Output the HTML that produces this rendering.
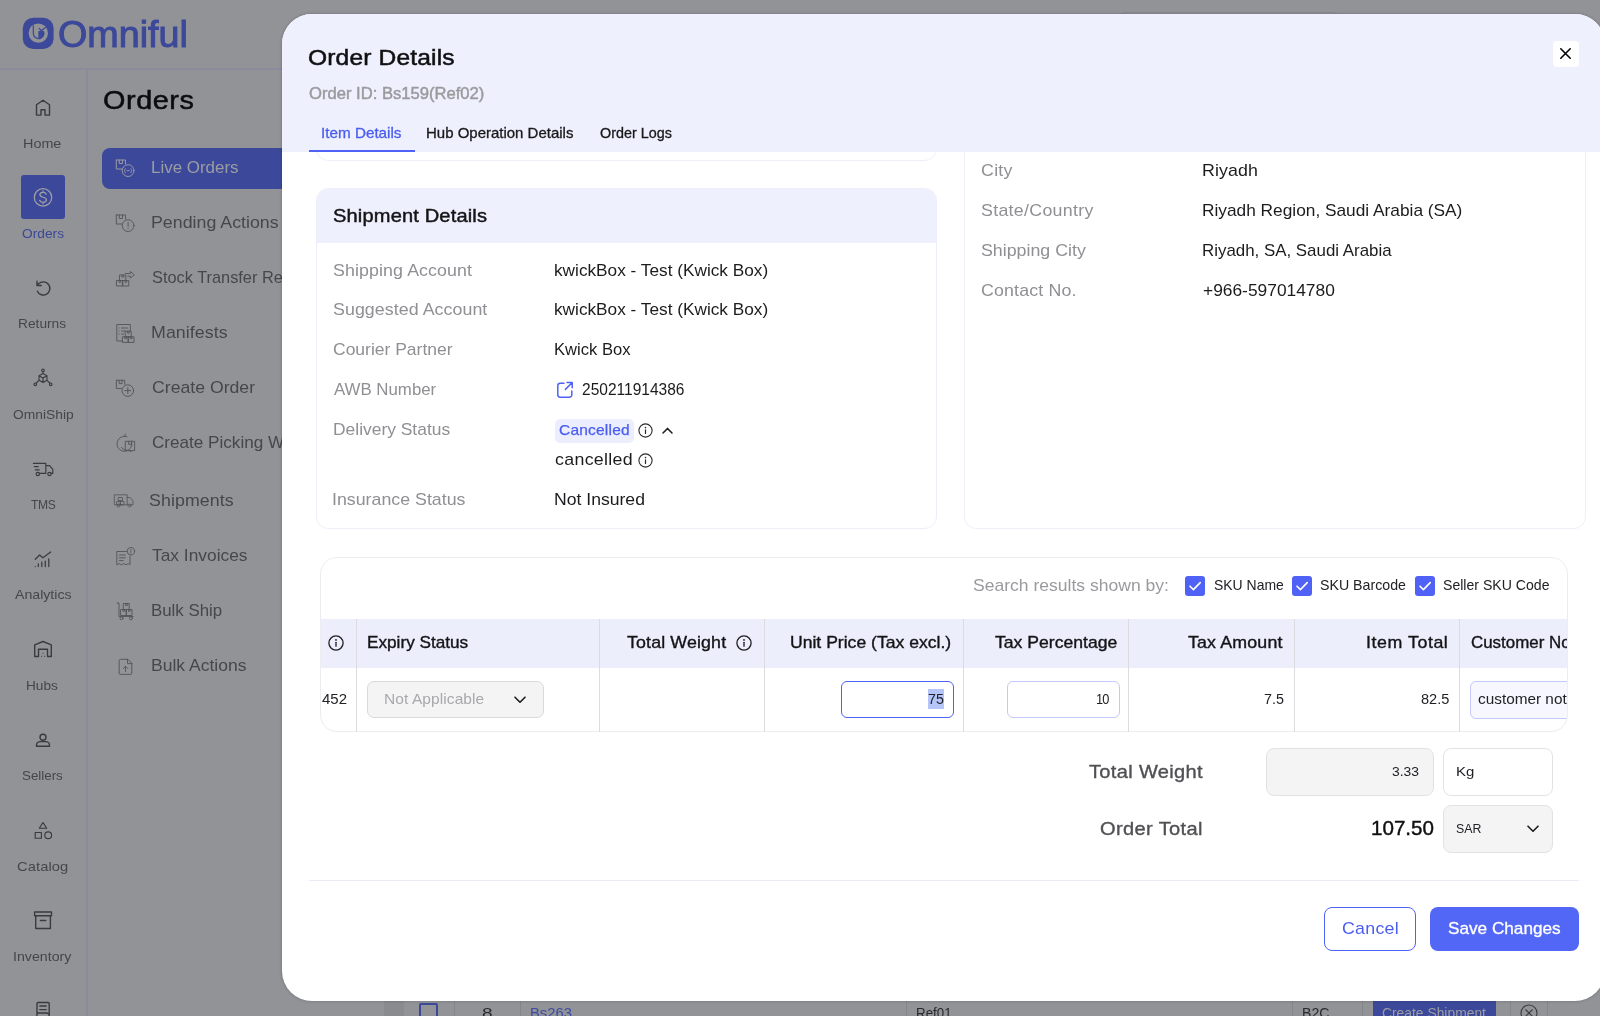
<!DOCTYPE html>
<html lang="en">
<head>
<meta charset="utf-8">
<title>Order Details - Omniful</title>
<style>
*{box-sizing:border-box;margin:0;padding:0}
html,body{width:1600px;height:1016px;overflow:hidden;background:#929397;font-family:"Liberation Sans",sans-serif;}
.abs{position:absolute}
.t{position:absolute;white-space:pre;display:block;transform-origin:0 50%}
#bg{position:absolute;left:0;top:0;width:1600px;height:1016px;overflow:hidden;background:#929397}
#modal{position:absolute;left:282px;top:14px;width:1323px;height:986.6px;background:#fff;border-radius:30px;overflow:hidden;box-shadow:0 0 3px rgba(40,40,60,.35)}
#mhead{position:absolute;left:0;top:0;width:100%;height:138px;background:#eff0fd}
#mc,#bgt{position:absolute;left:0;top:0;width:1600px;height:1016px;overflow:hidden;will-change:transform}
.card{position:absolute;border:1px solid #edeefa;border-radius:12px;background:#fff}
svg{position:absolute;overflow:visible}
.ico{fill:none;stroke:#3a3a3f;stroke-width:1.4;stroke-linecap:round;stroke-linejoin:round}
.mico{fill:none;stroke:#4a4a50;stroke-width:1;stroke-linecap:round;stroke-linejoin:round}
.vline{position:absolute;width:1px;background:#dcdce0;top:619px;height:113px}
.cb{position:absolute;width:20px;height:20px;border-radius:3px;background:#4f62f5;top:575.5px}
</style>
</head>
<body>
<div id="bg">
  <!-- header + sidebars (dimmed behind overlay) -->
  <div class="abs" style="left:0;top:68.2px;width:1600px;height:1.5px;background:#888c9d"></div>
  <div class="abs" style="left:86px;top:69px;width:2px;height:947px;background:#888c9d"></div>
  <div class="abs" style="left:1118px;top:11.5px;width:222px;height:30px;border:1px solid #8a8b90;border-radius:8px"></div>
  <div class="abs" style="left:21px;top:175px;width:44px;height:44px;border-radius:3px;background:#3c4899"></div>
  <div class="abs" style="left:101.5px;top:147.5px;width:200px;height:41.5px;border-radius:8px;background:#3c4899"></div>
  <!-- logo -->
<svg style="left:0;top:0" width="100" height="69" viewBox="0 0 100 69">
  <rect x="22.8" y="17.7" width="30.8" height="31.3" rx="10.5" ry="10.5" fill="#3c4899"/>
  <circle cx="38.3" cy="33.1" r="9.7" fill="#929397"/>
  <path d="M33.3 25.400V33.300A5.300 5.300 0 0 0 38.600 38.600" fill="none" stroke="#3c4899" stroke-width="1.200"/>
  <path d="M38.300 39.200V31.300L41.400 30.200 44.100 31.200A5.900 5.900 0 0 1 38.300 39.200Z" fill="#3c4899"/>
  <path d="M38.800 28.300L41.500 30.500 45.800 27.200" fill="none" stroke="#3c4899" stroke-width="1.200"/>
</svg>
<!-- sidebar icons -->
<svg style="left:0;top:0" width="88" height="1016" viewBox="0 0 88 1016">
 <g class="ico" stroke="#45464b" stroke-width="1.25">
  <path d="M36.5 115.100V104.800L43 100.200l6.500 4.600v10.300h-4.500v-5.300h-4v5.300z"/>
  <!-- returns -->
  <path d="M37.300 291.200a6.600 6.600 0 1 0 1.500-7.600l-1.800 1.800M37 281.200v4.300h4.300"/>
  <!-- omniship -->
  <path d="M43 373.500l4 2.200v4.600l-4 2.200-4-2.200v-4.600zM39 375.700l4 2.200 4-2.200M43 377.900v4.600M43 371.600v1.900M39 380.300l-2.700 2.700M47 380.300l2.700 2.700" stroke-width="1.100"/>
  <circle cx="43" cy="370.300" r="1.300" stroke-width="1.100"/><circle cx="35.300" cy="384.300" r="1.300" stroke-width="1.100"/><circle cx="50.700" cy="384.300" r="1.300" stroke-width="1.100"/>
  <!-- tms truck -->
  <path d="M36.500 463.400h9.300v10h-2.300M45.800 465.600h3.800l3.200 3.800v4h-1.600M39.300 473.400h5.500M33.400 463.400h3M34.300 466.600h4M35.300 469.800h4" stroke-width="1.150"/>
  <circle cx="37.800" cy="474" r="1.700" stroke-width="1.150"/><circle cx="49.500" cy="474" r="1.700" stroke-width="1.150"/>
  <!-- analytics -->
  <path d="M35.300 559.300l4.300-4.300 3.300 2.800 7.800-5.800M38.300 566.500v-2.600M41.800 566.500v-4.400M45.300 566.500v-5.400M48.800 566.500v-7.600M35.200 566.500h.1" stroke-width="1.250"/>
  <!-- hubs -->
  <path d="M34.700 656.500v-11.600L43 641.500l8.300 3.400v11.600h-3.800v-7.300h-9v7.300z"/>
  <path d="M41.500 656.300h.1M44.500 656.300h.1M43 653.300h.1" stroke-width="1.100"/>
  <!-- sellers -->
  <circle cx="43" cy="737.200" r="3"/>
  <path d="M36.500 746.300v-1.300c0-2 1.800-3.400 3.800-3.400h5.400c2 0 3.800 1.400 3.800 3.400v1.300z"/>
  <!-- catalog -->
  <path d="M43 822.500l3.700 5.700h-7.400zM35.200 832.500h6.200v5.700h-6.200z" stroke-width="1.150"/>
  <circle cx="48.200" cy="835.300" r="3.400" stroke-width="1.150"/>
  <!-- inventory -->
  <path d="M34.600 912h16.900v3.700H34.600zM35.700 915.700v12.800h14.700v-12.800M40.400 920.500h5.400"/>
  <!-- receipt -->
  <path d="M37 1017v-13.500a1 1 0 0 1 1-1h10.200a1 1 0 0 1 1 1v13.500M39.800 1006h6.400M39.800 1009.600h6.400M37 1013h9.500a2.600 2.600 0 0 1 2.600 2.600"/>
 </g>
 <!-- orders (active) -->
 <circle cx="43" cy="197.400" r="8.700" fill="none" stroke="#9fa0a7" stroke-width="1.250"/>
 <path d="M46.200 194.200c-.5-1.200-1.700-1.800-3.200-1.800-1.800 0-3.100.9-3.100 2.400 0 3.400 6.500 1.500 6.500 5 0 1.600-1.400 2.500-3.300 2.500-1.700 0-3-.7-3.500-2M43 190.800v1.600M43 202.300v1.600" fill="none" stroke="#9fa0a7" stroke-width="1.250" stroke-linecap="round"/>
</svg>
<!-- menu icons -->
<svg style="left:100px;top:140px" width="60" height="560" viewBox="100 140 60 560">
 <g fill="none" stroke="#9c9da3" stroke-width=".95" stroke-linecap="round" stroke-linejoin="round">
  <path d="M116.300 160h9.200v4M116.300 160v9h5.500M119.300 160v3.500h3.200V160"/>
  <circle cx="128.100" cy="170.600" r="5.900"/>
  <path d="M125.300 168.600c-.9 1.200-.9 2.800 0 4M130.900 168.600c.9 1.200.9 2.800 0 4M127 170.600h2.200"/>
 </g>
 <g fill="none" stroke="#55565b" stroke-width=".95" stroke-linecap="round" stroke-linejoin="round">
  <!-- pending actions -->
  <path d="M116.300 215h9.200v4M116.300 215v9h5.500M119.300 215v3.500h3.200V215"/>
  <circle cx="128.100" cy="225.600" r="5.900"/>
  <path d="M128.100 222.300v4.200M128.100 228.500v.2"/>
  <!-- stock transfer -->
  <path d="M116.800 280.500h6v5.500h-6zM122.800 280.500h6v5.500h-6zM119.800 275h6v5.500h-6zM121.800 275v2h2v-2M119 280.500v1.800h1.600v-1.800M125 280.500v1.800h1.600v-1.800"/>
  <path d="M125.300 273.500h5v-2l4 3.300-4 3.300v-2h-2.500"/>
  <!-- manifests -->
  <path d="M122.600 341h-5.800v-16.500h13.500v6.500M119 328h.2M119 331h.2M119 334h.2M121.500 328h6M121.500 331h4M121.500 334h2"/>
  <path d="M122.800 336.800h5.600v5.600h-5.600zM128.400 336.800h5.600v5.600h-5.600zM125.600 331.200h5.600v5.600h-5.600zM127.600 331.200v2h1.600v-2M124.800 336.800v1.800h1.600v-1.800M130.400 336.800v1.800h1.600v-1.800"/>
  <!-- create order -->
  <path d="M116.400 380.300h8.300v4M116.400 380.300v8.200h5M119.200 380.300v3.300h2.800v-3.300"/>
  <circle cx="127.800" cy="390.600" r="5.800"/>
  <path d="M125 390.600h5.600M127.800 387.800v5.600"/>
  <!-- create picking wave -->
  <path d="M124.500 436.300a7.500 7.500 0 1 0 7 5M127 436.800l-2.500-.5 1-2.300"/>
  <path d="M125.700 441.300h8.900v9.300h-8.900zM128.700 441.300v3h2.900v-3M121.500 447.500l3 2.500 4.500.5 2 1.200"/>
  <!-- shipments -->
  <path d="M114.700 494.800h12.500v10h-12.500zM127.200 497.500h3l2.800 3.500v3.800h-5.800M118.500 497.500h4v3h-4zM117 501.500h3.500v3.300H117zM120.500 501.500h3.500v3.300h-3.500z" stroke-width=".85"/>
  <circle cx="118.500" cy="505.500" r="1.500" stroke-width=".85"/><circle cx="129.500" cy="505.500" r="1.500" stroke-width=".85"/>
  <!-- tax invoices -->
  <path d="M127 551.500h-10.200v13.300l2.300-1.200 2.300 1.200 2.300-1.200 2.300 1.200 2.300-1.200 1.700.9v-8.500M119.300 555h6M119.300 557.800h6M119.300 560.600h4"/>
  <circle cx="130.900" cy="551.200" r="3.700"/>
  <path d="M130.900 549.300v3.800" stroke-width=".8"/>
  <!-- bulk ship -->
  <path d="M117 603h2v13.500h14M121 609.500h5.500v6H121zM126.500 609.500h5.500v6h-5.500zM123.700 603.500h5.500v6h-5.500zM125.700 603.500v2h1.600v-2M123 609.500v1.800h1.600v-1.800M128.500 609.500v1.800h1.600v-1.800"/>
  <circle cx="121.500" cy="618.300" r="1.500"/><circle cx="131" cy="618.300" r="1.500"/>
  <!-- bulk actions -->
  <path d="M127.500 659.300h-7a1.300 1.300 0 0 0-1.300 1.300v12.500a1.300 1.300 0 0 0 1.300 1.300h10a1.300 1.300 0 0 0 1.300-1.300v-9.500zM127.500 659.300v4.300h4.300M125.500 671.500v-5M123.300 668.500l2.200-2.200 2.200 2.200"/>
 </g>
</svg>

  <!-- bottom table row peeking under modal -->
    <div class="abs" style="left:384px;top:1000px;width:20px;height:16px;background:#8a8b8f"></div>
  <div class="abs" style="left:454px;top:1000px;width:1px;height:16px;background:#85868b"></div>
  <div class="abs" style="left:520px;top:1000px;width:1px;height:16px;background:#85868b"></div>
  <div class="abs" style="left:906px;top:1000px;width:1px;height:16px;background:#85868b"></div>
  <div class="abs" style="left:1292px;top:1000px;width:1px;height:16px;background:#85868b"></div>
  <div class="abs" style="left:1362px;top:1000px;width:1px;height:16px;background:#85868b"></div>
  <div class="abs" style="left:1510px;top:1000px;width:1px;height:16px;background:#85868b"></div>
  <div class="abs" style="left:1547px;top:1000px;width:1px;height:16px;background:#85868b"></div>
  <div class="abs" style="left:419px;top:1003px;width:19px;height:19px;border:2px solid #3c4899;border-radius:2px"></div>
  <div class="abs" style="left:1373px;top:999px;width:123px;height:24px;background:#3c4899"></div>
  <svg style="left:1520px;top:1004.3px" width="18" height="18" viewBox="0 0 18 18"><circle cx="9" cy="9" r="8" fill="none" stroke="#3a3a3f" stroke-width="1.1"/><path d="M5.5 5.5l7 7M12.5 5.5l-7 7" stroke="#3a3a3f" stroke-width="1.1" fill="none"/></svg>
</div>
<div id="bgt">
<span class="t" style="left:58.1px;top:9.2px;font-size:37px;line-height:52px;color:#3c4899;transform:scaleX(1.0189);-webkit-text-stroke:1.0px #3c4899;">Omniful</span>
<span class="t" style="left:102.9px;top:82.1px;font-size:25.5px;line-height:36px;color:#0c0c0e;transform:scaleX(1.13);letter-spacing:0.5px;-webkit-text-stroke:0.5px #0c0c0e;">Orders</span>
<span class="t" style="left:23.4px;top:134.6px;font-size:13.0px;line-height:18px;color:#45464b;transform:scaleX(1.1061);">Home</span>
<span class="t" style="left:22.0px;top:225.1px;font-size:13.0px;line-height:18px;color:#3c4899;transform:scaleX(1.0581);">Orders</span>
<span class="t" style="left:18.4px;top:315.1px;font-size:13.0px;line-height:18px;color:#45464b;transform:scaleX(1.0568);">Returns</span>
<span class="t" style="left:12.5px;top:405.6px;font-size:13.0px;line-height:18px;color:#45464b;transform:scaleX(1.0625);">OmniShip</span>
<span class="t" style="left:30.8px;top:496.1px;font-size:13.0px;line-height:18px;color:#45464b;transform:scaleX(0.93);letter-spacing:-0.35px;">TMS</span>
<span class="t" style="left:15.0px;top:586.1px;font-size:13.0px;line-height:18px;color:#45464b;transform:scaleX(1.0874);">Analytics</span>
<span class="t" style="left:26.4px;top:676.6px;font-size:13.0px;line-height:18px;color:#45464b;transform:scaleX(1.0517);">Hubs</span>
<span class="t" style="left:22.2px;top:767.1px;font-size:13.0px;line-height:18px;color:#45464b;transform:scaleX(1.026);">Sellers</span>
<span class="t" style="left:17.2px;top:857.6px;font-size:13.0px;line-height:18px;color:#45464b;transform:scaleX(1.13);letter-spacing:0.09px;">Catalog</span>
<span class="t" style="left:13.1px;top:948.1px;font-size:13.0px;line-height:18px;color:#45464b;transform:scaleX(1.0909);">Inventory</span>
<span class="t" style="left:151.2px;top:156.6px;font-size:15.75px;line-height:22px;color:#9c9da3;transform:scaleX(1.0755);">Live Orders</span>
<span class="t" style="left:151.1px;top:211.6px;font-size:15.75px;line-height:22px;color:#46474c;transform:scaleX(1.13);">Pending Actions</span>
<span class="t" style="left:151.7px;top:266.6px;font-size:15.75px;line-height:22px;color:#46474c;transform:scaleX(1.038);">Stock Transfer Requests</span>
<span class="t" style="left:151.1px;top:321.6px;font-size:15.75px;line-height:22px;color:#46474c;transform:scaleX(1.13);letter-spacing:0.05px;">Manifests</span>
<span class="t" style="left:151.7px;top:376.6px;font-size:15.75px;line-height:22px;color:#46474c;transform:scaleX(1.1209);">Create Order</span>
<span class="t" style="left:151.7px;top:431.6px;font-size:15.75px;line-height:22px;color:#46474c;transform:scaleX(1.0862);">Create Picking Wave</span>
<span class="t" style="left:149.2px;top:489.6px;font-size:15.75px;line-height:22px;color:#46474c;transform:scaleX(1.13);letter-spacing:0.06px;">Shipments</span>
<span class="t" style="left:152.2px;top:544.6px;font-size:15.75px;line-height:22px;color:#46474c;transform:scaleX(1.102);">Tax Invoices</span>
<span class="t" style="left:151.2px;top:599.6px;font-size:15.75px;line-height:22px;color:#46474c;transform:scaleX(1.0698);">Bulk Ship</span>
<span class="t" style="left:151.1px;top:654.6px;font-size:15.75px;line-height:22px;color:#46474c;transform:scaleX(1.1131);">Bulk Actions</span>
<span class="t" style="left:481.8px;top:1003.9px;font-size:13.75px;line-height:19px;color:#2a2a2e;transform:scaleX(1.3846);">8</span>
<span class="t" style="left:529.9px;top:1003.9px;font-size:13.75px;line-height:19px;color:#3d4aa3;transform:scaleX(1.0738);">Bs263</span>
<span class="t" style="left:916.0px;top:1003.9px;font-size:13.75px;line-height:19px;color:#2a2a2e;transform:scaleX(0.9714);">Ref01</span>
<span class="t" style="left:1302.0px;top:1003.9px;font-size:13.75px;line-height:19px;color:#2a2a2e;transform:scaleX(1.0297);">B2C</span>
<span class="t" style="left:1382.2px;top:1003.9px;font-size:13.75px;line-height:19px;color:#9c9da3;transform:scaleX(1.0073);">Create Shipment</span>
</div>
<div id="modal"></div>
<div id="mc">
<!-- previous card bottom edge (scrolled under header) -->
<div class="card" style="left:316px;top:100px;width:621px;height:61px"></div>
<!-- shipment details card -->
<div class="card" style="left:316px;top:188px;width:621px;height:340.5px;overflow:hidden"><div class="abs" style="left:0;top:0;width:100%;height:53.5px;background:#eff0fd"></div></div>
<!-- right (address) card -->
<div class="card" style="left:964px;top:100px;width:622px;height:428.5px"></div>
<!-- modal header -->
<div class="abs" style="left:282px;top:14px;width:1323px;height:138px;background:#eff0fd;border-radius:30px 30px 0 0"></div>
<div class="abs" style="left:309px;top:150px;width:105.5px;height:2px;background:#4f62f5"></div>
<div class="abs" style="left:1553px;top:41px;width:26px;height:26px;border-radius:4px;background:#fff"></div>
<svg style="left:1560.1px;top:48.4px" width="11" height="11" viewBox="0 0 11 11"><path d="M0.8 0.8l9.4 9.4M10.2 0.8l-9.4 9.4" stroke="#050506" stroke-width="1.6" fill="none" stroke-linecap="round"/></svg>
<!-- AWB link icon -->
<svg style="left:556px;top:381px" width="18" height="18" viewBox="0 0 18 18"><path d="M8 2.2H4.2a2.4 2.4 0 0 0-2.4 2.4v9.2a2.4 2.4 0 0 0 2.4 2.4h9.2a2.4 2.4 0 0 0 2.4-2.4V10" fill="none" stroke="#4f62f5" stroke-width="1.5" stroke-linecap="round"/><path d="M11 1.6h5.2v5.2M16 1.8L9.4 8.4" fill="none" stroke="#4f62f5" stroke-width="1.5" stroke-linecap="round" stroke-linejoin="round"/></svg>
<!-- cancelled badge -->
<div class="abs" style="left:555px;top:418.5px;width:78.5px;height:24.5px;border-radius:5px;background:#eceefe"></div>
<svg style="left:638px;top:423px" width="15" height="15" viewBox="0 0 15 15"><circle cx="7.5" cy="7.5" r="6.6" fill="none" stroke="#2a2a2e" stroke-width="1.1"/><path d="M7.5 6.8v3.6" stroke="#2a2a2e" stroke-width="1.2" stroke-linecap="round"/><circle cx="7.5" cy="4.6" r=".8" fill="#2a2a2e"/></svg>
<svg style="left:661.5px;top:426.5px" width="11" height="7" viewBox="0 0 11 7"><path d="M1 6l4.5-4.6L10 6" fill="none" stroke="#1c1c1e" stroke-width="1.5" stroke-linecap="round" stroke-linejoin="round"/></svg>
<svg style="left:637.5px;top:452.5px" width="15" height="15" viewBox="0 0 15 15"><circle cx="7.5" cy="7.5" r="6.6" fill="none" stroke="#2a2a2e" stroke-width="1.1"/><path d="M7.5 6.8v3.6" stroke="#2a2a2e" stroke-width="1.2" stroke-linecap="round"/><circle cx="7.5" cy="4.6" r=".8" fill="#2a2a2e"/></svg>
<!-- table card -->
<div class="abs" style="left:320px;top:556.5px;width:1247.5px;height:175.5px;border:1px solid #ececf1;border-radius:17px;overflow:hidden;background:#fff">
  <div class="abs" style="left:0;top:61.5px;width:100%;height:48.5px;background:#eceefc"></div>
  <div class="abs" style="left:1148.5px;top:123.5px;width:140px;height:37.5px;border:1px solid #c3c9fb;border-radius:6px;background:#f7f8ff"></div>
<span class="t" style="left:1149.5px;top:74.8px;font-size:15.75px;line-height:22px;color:#141416;transform:scaleX(1.0735);-webkit-text-stroke:0.35px #141416;">Customer Notes</span>
<span class="t" style="left:1157.2px;top:132.2px;font-size:13.75px;line-height:19px;color:#222226;transform:scaleX(1.1161);">customer notes</span>
</div>
<div class="vline" style="left:356px"></div>
<div class="vline" style="left:599px"></div>
<div class="vline" style="left:764px"></div>
<div class="vline" style="left:963px"></div>
<div class="vline" style="left:1128px"></div>
<div class="vline" style="left:1294px"></div>
<div class="vline" style="left:1459px"></div>
<!-- checkboxes -->
<div class="cb" style="left:1185px"></div><div class="cb" style="left:1292px"></div><div class="cb" style="left:1415.2px"></div>
<svg style="left:1185px;top:575.5px" width="20" height="20" viewBox="0 0 20 20"><path d="M5 10.2l3.4 3.4L15.2 6.6" fill="none" stroke="#fff" stroke-width="1.6" stroke-linecap="round" stroke-linejoin="round"/></svg>
<svg style="left:1292px;top:575.5px" width="20" height="20" viewBox="0 0 20 20"><path d="M5 10.2l3.4 3.4L15.2 6.6" fill="none" stroke="#fff" stroke-width="1.6" stroke-linecap="round" stroke-linejoin="round"/></svg>
<svg style="left:1415.2px;top:575.5px" width="20" height="20" viewBox="0 0 20 20"><path d="M5 10.2l3.4 3.4L15.2 6.6" fill="none" stroke="#fff" stroke-width="1.6" stroke-linecap="round" stroke-linejoin="round"/></svg>
<!-- header info icons -->
<svg style="left:328.3px;top:634.7px" width="16" height="16" viewBox="0 0 16 16"><circle cx="8" cy="8" r="7.1" fill="none" stroke="#1c1c1e" stroke-width="1.3"/><path d="M8 7.3v3.9" stroke="#1c1c1e" stroke-width="1.3" stroke-linecap="round"/><circle cx="8" cy="4.9" r=".9" fill="#1c1c1e"/></svg>
<svg style="left:736.3px;top:634.7px" width="16" height="16" viewBox="0 0 16 16"><circle cx="8" cy="8" r="7.1" fill="none" stroke="#1c1c1e" stroke-width="1.3"/><path d="M8 7.3v3.9" stroke="#1c1c1e" stroke-width="1.3" stroke-linecap="round"/><circle cx="8" cy="4.9" r=".9" fill="#1c1c1e"/></svg>
<!-- row controls -->
<div class="abs" style="left:367px;top:681px;width:176.5px;height:37px;border:1px solid #d9d9dc;border-radius:7px;background:#f4f4f5"></div>
<svg style="left:513.5px;top:695.5px" width="12" height="8" viewBox="0 0 12 8"><path d="M1 1.2l5 5 5-5" fill="none" stroke="#1c1c1e" stroke-width="1.6" stroke-linecap="round" stroke-linejoin="round"/></svg>
<div class="abs" style="left:841.3px;top:680.7px;width:112.8px;height:37.4px;border:1.4px solid #4f62f5;border-radius:6px;background:#fff"></div>
<div class="abs" style="left:928.2px;top:689.3px;width:15.8px;height:19.3px;background:#b5c5fa"></div>
<div class="abs" style="left:1007px;top:681px;width:112.5px;height:37px;border:1px solid #c3c9fb;border-radius:6px;background:#fff"></div>
<!-- totals -->
<div class="abs" style="left:1265.5px;top:748px;width:168px;height:47.5px;border:1px solid #e2e2e5;border-radius:8px;background:#f4f4f5"></div>
<div class="abs" style="left:1442.5px;top:748px;width:110px;height:47.5px;border:1px solid #e2e2e5;border-radius:8px;background:#fff"></div>
<div class="abs" style="left:1442.5px;top:804.7px;width:110px;height:48px;border:1px solid #e2e2e5;border-radius:8px;background:#f4f4f5"></div>
<svg style="left:1527px;top:825px" width="12" height="8" viewBox="0 0 12 8"><path d="M1 1.2l5 5 5-5" fill="none" stroke="#1c1c1e" stroke-width="1.6" stroke-linecap="round" stroke-linejoin="round"/></svg>
<div class="abs" style="left:309px;top:880px;width:1270px;height:1px;background:#ebecf8"></div>
<div class="abs" style="left:1323.7px;top:907px;width:92.5px;height:44px;border:1px solid #4f62f5;border-radius:8px;background:#fff"></div>
<div class="abs" style="left:1429.7px;top:907px;width:149.5px;height:44px;border-radius:8px;background:#5367f7"></div>

<span class="t" style="left:308.2px;top:42.7px;font-size:21.75px;line-height:30px;color:#101012;transform:scaleX(1.13);letter-spacing:0.13px;-webkit-text-stroke:0.5px #101012;">Order Details</span>
<span class="t" style="left:308.5px;top:82.6px;font-size:15.75px;line-height:22px;color:#9a9a9e;transform:scaleX(1.0545);-webkit-text-stroke:0.45px #9a9a9e;">Order ID: Bs159(Ref02)</span>
<span class="t" style="left:320.9px;top:123.9px;font-size:13.75px;line-height:19px;color:#4a5df0;transform:scaleX(1.1088);-webkit-text-stroke:0.3px #4a5df0;">Item Details</span>
<span class="t" style="left:426.4px;top:123.9px;font-size:13.75px;line-height:19px;color:#19191b;transform:scaleX(1.0896);-webkit-text-stroke:0.3px #19191b;">Hub Operation Details</span>
<span class="t" style="left:600.0px;top:123.9px;font-size:13.75px;line-height:19px;color:#19191b;transform:scaleX(1.0441);-webkit-text-stroke:0.3px #19191b;">Order Logs</span>
<span class="t" style="left:333.4px;top:203.8px;font-size:17.75px;line-height:25px;color:#141416;transform:scaleX(1.13);letter-spacing:0.14px;-webkit-text-stroke:0.45px #141416;">Shipment Details</span>
<span class="t" style="left:333.2px;top:259.6px;font-size:15.75px;line-height:22px;color:#8f8f94;transform:scaleX(1.13);letter-spacing:0.09px;">Shipping Account</span>
<span class="t" style="left:554.4px;top:259.6px;font-size:15.75px;line-height:22px;color:#1c1c1e;transform:scaleX(1.0942);">kwickBox - Test (Kwick Box)</span>
<span class="t" style="left:333.2px;top:299.3px;font-size:15.75px;line-height:22px;color:#8f8f94;transform:scaleX(1.13);letter-spacing:0.05px;">Suggested Account</span>
<span class="t" style="left:554.4px;top:299.3px;font-size:15.75px;line-height:22px;color:#1c1c1e;transform:scaleX(1.0942);">kwickBox - Test (Kwick Box)</span>
<span class="t" style="left:333.2px;top:339.1px;font-size:15.75px;line-height:22px;color:#8f8f94;transform:scaleX(1.1101);">Courier Partner</span>
<span class="t" style="left:554.2px;top:339.1px;font-size:15.75px;line-height:22px;color:#1c1c1e;transform:scaleX(1.0526);">Kwick Box</span>
<span class="t" style="left:334.0px;top:378.6px;font-size:15.75px;line-height:22px;color:#8f8f94;transform:scaleX(1.0681);">AWB Number</span>
<span class="t" style="left:332.6px;top:418.6px;font-size:15.75px;line-height:22px;color:#8f8f94;transform:scaleX(1.1058);">Delivery Status</span>
<span class="t" style="left:332.3px;top:488.9px;font-size:15.75px;line-height:22px;color:#8f8f94;transform:scaleX(1.1293);">Insurance Status</span>
<span class="t" style="left:554.1px;top:488.9px;font-size:15.75px;line-height:22px;color:#1c1c1e;transform:scaleX(1.1167);">Not Insured</span>
<span class="t" style="left:581.8px;top:378.6px;font-size:15.75px;line-height:22px;color:#1c1c1e;transform:scaleX(0.9854);">250211914386</span>
<span class="t" style="left:558.9px;top:421.4px;font-size:13.75px;line-height:19px;color:#4a5df0;transform:scaleX(1.13);letter-spacing:0.17px;-webkit-text-stroke:0.25px #4a5df0;">Cancelled</span>
<span class="t" style="left:554.9px;top:449.4px;font-size:15.75px;line-height:22px;color:#1c1c1e;transform:scaleX(1.13);letter-spacing:0.28px;">cancelled</span>
<span class="t" style="left:981.2px;top:160.3px;font-size:15.75px;line-height:22px;color:#8f8f94;transform:scaleX(1.13);letter-spacing:0.25px;">City</span>
<span class="t" style="left:1202.2px;top:160.3px;font-size:15.75px;line-height:22px;color:#1c1c1e;transform:scaleX(1.13);letter-spacing:0.07px;">Riyadh</span>
<span class="t" style="left:981.2px;top:200.1px;font-size:15.75px;line-height:22px;color:#8f8f94;transform:scaleX(1.13);letter-spacing:0.26px;">State/Country</span>
<span class="t" style="left:1202.2px;top:200.1px;font-size:15.75px;line-height:22px;color:#1c1c1e;transform:scaleX(1.0974);">Riyadh Region, Saudi Arabia (SA)</span>
<span class="t" style="left:981.2px;top:239.8px;font-size:15.75px;line-height:22px;color:#8f8f94;transform:scaleX(1.13);">Shipping City</span>
<span class="t" style="left:1202.3px;top:239.8px;font-size:15.75px;line-height:22px;color:#1c1c1e;transform:scaleX(1.072);">Riyadh, SA, Saudi Arabia</span>
<span class="t" style="left:981.2px;top:279.6px;font-size:15.75px;line-height:22px;color:#8f8f94;transform:scaleX(1.13);letter-spacing:0.13px;">Contact No.</span>
<span class="t" style="left:1202.8px;top:279.6px;font-size:15.75px;line-height:22px;color:#1c1c1e;transform:scaleX(1.1027);">+966-597014780</span>
<span class="t" style="left:973.2px;top:574.9px;font-size:15.75px;line-height:22px;color:#9a9a9e;transform:scaleX(1.1137);">Search results shown by:</span>
<span class="t" style="left:1213.5px;top:576.4px;font-size:13.75px;line-height:19px;color:#222226;transform:scaleX(1.0148);">SKU Name</span>
<span class="t" style="left:1320.4px;top:576.4px;font-size:13.75px;line-height:19px;color:#222226;transform:scaleX(1.0317);">SKU Barcode</span>
<span class="t" style="left:1443.2px;top:576.4px;font-size:13.75px;line-height:19px;color:#222226;transform:scaleX(1.0244);">Seller SKU Code</span>
<span class="t" style="left:367.4px;top:632.3px;font-size:15.75px;line-height:22px;color:#141416;transform:scaleX(1.0907);-webkit-text-stroke:0.35px #141416;">Expiry Status</span>
<span class="t" style="left:626.7px;top:632.3px;font-size:15.75px;line-height:22px;color:#141416;transform:scaleX(1.13);letter-spacing:0.12px;-webkit-text-stroke:0.35px #141416;">Total Weight</span>
<span class="t" style="left:790.2px;top:632.3px;font-size:15.75px;line-height:22px;color:#141416;transform:scaleX(1.1159);-webkit-text-stroke:0.35px #141416;">Unit Price (Tax excl.)</span>
<span class="t" style="left:994.7px;top:632.3px;font-size:15.75px;line-height:22px;color:#141416;transform:scaleX(1.1182);-webkit-text-stroke:0.35px #141416;">Tax Percentage</span>
<span class="t" style="left:1187.7px;top:632.3px;font-size:15.75px;line-height:22px;color:#141416;transform:scaleX(1.13);letter-spacing:0.14px;-webkit-text-stroke:0.35px #141416;">Tax Amount</span>
<span class="t" style="left:1366.4px;top:632.3px;font-size:15.75px;line-height:22px;color:#141416;transform:scaleX(1.13);letter-spacing:0.49px;-webkit-text-stroke:0.35px #141416;">Item Total</span>
<span class="t" style="left:321.7px;top:689.7px;font-size:13.75px;line-height:19px;color:#222226;transform:scaleX(1.0909);">452</span>
<span class="t" style="left:383.5px;top:689.7px;font-size:13.75px;line-height:19px;color:#a9a9ad;transform:scaleX(1.13);letter-spacing:0.06px;">Not Applicable</span>
<span class="t" style="left:928.2px;top:689.7px;font-size:13.75px;line-height:19px;color:#222226;transform:scaleX(1.0357);">75</span>
<span class="t" style="left:1096.1px;top:689.7px;font-size:13.75px;line-height:19px;color:#222226;transform:scaleX(0.93);letter-spacing:-0.85px;">10</span>
<span class="t" style="left:1263.9px;top:689.7px;font-size:13.75px;line-height:19px;color:#222226;transform:scaleX(1.0423);">7.5</span>
<span class="t" style="left:1420.9px;top:689.7px;font-size:13.75px;line-height:19px;color:#222226;transform:scaleX(1.0602);">82.5</span>
<span class="t" style="left:1089.0px;top:759.6px;font-size:17.75px;line-height:25px;color:#505055;transform:scaleX(1.13);letter-spacing:0.29px;-webkit-text-stroke:0.35px #505055;">Total Weight</span>
<span class="t" style="left:1392.1px;top:762.2px;font-size:13.25px;line-height:19px;color:#222226;transform:scaleX(1.0505);">3.33</span>
<span class="t" style="left:1455.9px;top:762.2px;font-size:13.25px;line-height:19px;color:#222226;transform:scaleX(1.13);letter-spacing:0.09px;">Kg</span>
<span class="t" style="left:1099.7px;top:816.9px;font-size:17.75px;line-height:25px;color:#505055;transform:scaleX(1.13);letter-spacing:0.32px;-webkit-text-stroke:0.35px #505055;">Order Total</span>
<span class="t" style="left:1370.7px;top:814.3px;font-size:19.75px;line-height:28px;color:#101012;transform:scaleX(1.0427);-webkit-text-stroke:0.4px #101012;">107.50</span>
<span class="t" style="left:1456.3px;top:819.0px;font-size:13.25px;line-height:19px;color:#222226;transform:scaleX(0.932);">SAR</span>
<span class="t" style="left:1342.0px;top:918.0px;font-size:15.75px;line-height:22px;color:#4a5df0;transform:scaleX(1.13);letter-spacing:0.23px;">Cancel</span>
<span class="t" style="left:1447.8px;top:918.0px;font-size:15.75px;line-height:22px;color:#ffffff;transform:scaleX(1.0898);-webkit-text-stroke:0.3px #ffffff;">Save Changes</span>
</div>
</body>
</html>
